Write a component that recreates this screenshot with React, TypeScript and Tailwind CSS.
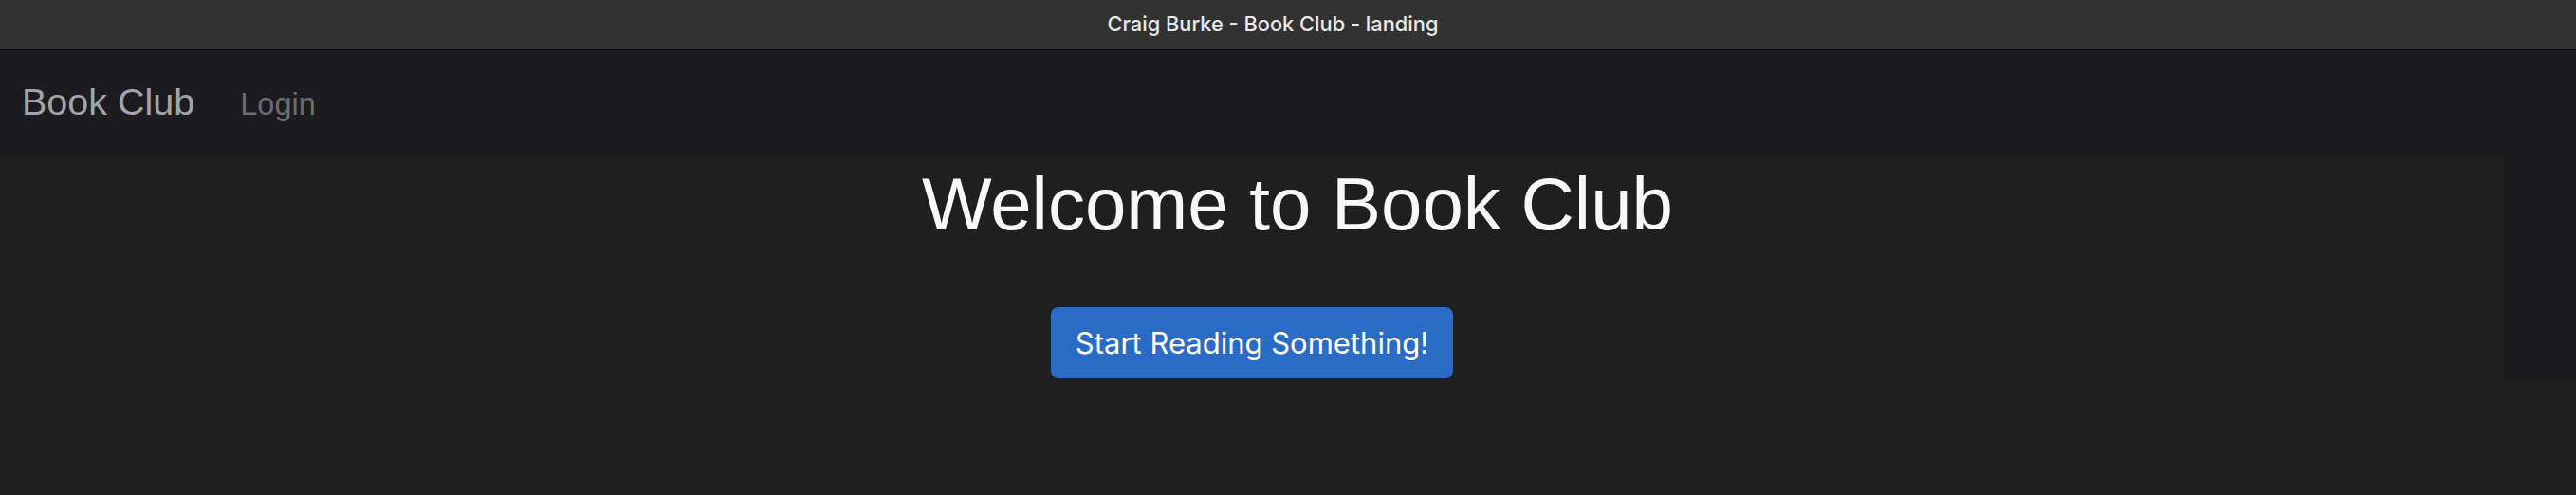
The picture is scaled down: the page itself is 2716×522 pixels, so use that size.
import React from "react";

export default function App() {
  return (
    <div className="w-[2716px] h-[522px] bg-[#1f1f1f] flex flex-col overflow-hidden">
      <div className="h-[53px] shrink-0 bg-[#323232] border-b border-[#0a0a0a] flex items-center justify-center pr-[32px]">
        <span className="text-[21.8px] leading-none text-[#e8e8e8] font-medium" style={{ fontFamily: "Inter, 'Noto Sans', sans-serif" }}>
          Craig Burke - Book Club - landing
        </span>
      </div>
      <nav
        className="h-[111px] shrink-0 bg-[#1c1b20] flex items-baseline pt-[35px] pl-[23px] gap-[48px]"
        style={{ fontFamily: "'Liberation Sans', Arial, sans-serif" }}
      >
        <span className="text-[39.5px] leading-none text-[#a4a4a6]">Book Club</span>
        <span className="text-[32.5px] leading-none text-[#6d6d70]">Login</span>
      </nav>
      <div className="flex h-[236px] shrink-0">
        <main className="flex-1 bg-[#1f1f1f] flex flex-col items-center pt-[12px]">
          <h1
            className="w-full text-center pl-[96px] text-[78px] leading-none text-[#f8f8f8]"
            style={{ fontFamily: "'Liberation Sans', Arial, sans-serif" }}
          >
            Welcome to Book Club
          </h1>
          <button
            className="mt-[70px] w-[424px] h-[75px] rounded-[8px] bg-[#2a6bc6] text-white text-[31px] leading-none flex items-center justify-center"
            style={{ fontFamily: "Inter, 'Noto Sans', sans-serif" }}
          >
            Start Reading Something!
          </button>
        </main>
        <div className="w-[76px] bg-[#1c1b20]" />
      </div>
    </div>
  );
}
